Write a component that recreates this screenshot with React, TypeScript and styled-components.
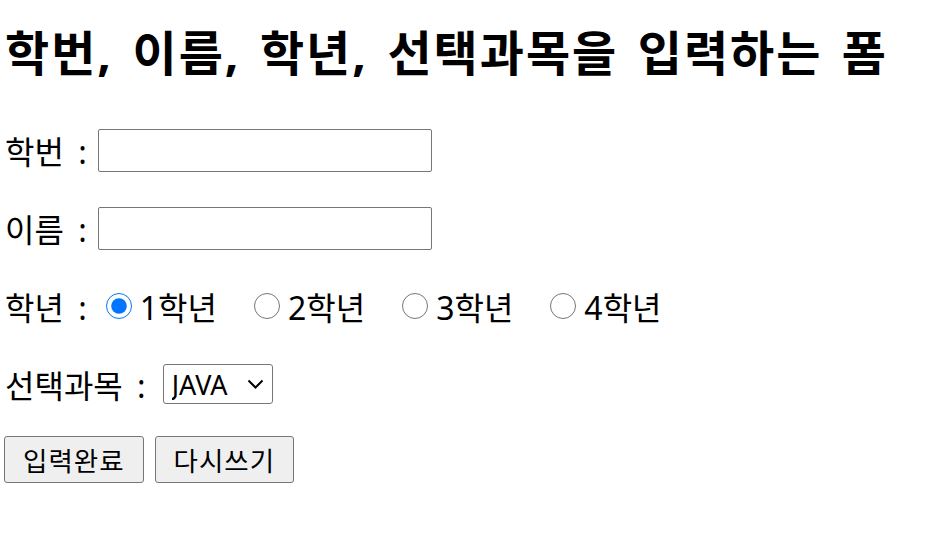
import React from 'react';
import styled, { createGlobalStyle } from 'styled-components';

const GlobalStyle = createGlobalStyle`
    html, body {
        margin: 0;
        padding: 0;
        background: #ffffff;
    }

    body {
        font-family: "Noto Sans", "Noto Sans CJK KR", sans-serif;
        color: #000000;
    }
`;

const Page = styled.form`
    display: flex;
    flex-direction: column;
    gap: 32px;
    padding: 18px 0 0 5px;
`;

const Title = styled.h2`
    margin: 0 0 7px 0;
    font-size: 48px;
    line-height: 70px;
    font-weight: 700;
    letter-spacing: 2px;
    word-spacing: 5px;
    white-space: nowrap;
`;

const Row = styled.div`
    display: flex;
    align-items: center;
    height: 46px;
    font-size: 32px;
    word-spacing: 6px;
    white-space: nowrap;
`;

const Label = styled.span`
    margin-right: 11px;
`;

const TextInput = styled.input`
    box-sizing: border-box;
    width: 334px;
    height: 43px;
    margin: 0;
    padding: 2px 6px;
    border: 1px solid #767676;
    border-radius: 2px;
    font-size: 26px;
    font-family: inherit;
    background: #ffffff;
`;

const RadioGroup = styled.div`
    display: flex;
    align-items: center;
    gap: 37px;
    margin-left: 8px;
`;

const RadioOption = styled.label`
    display: flex;
    align-items: center;
    gap: 8px;
`;

const Radio = styled.input`
    width: 26px;
    height: 26px;
    margin: 0;
    accent-color: #0075ff;
`;

const SelectBox = styled.div`
    position: relative;
    display: flex;
    margin-left: 6px;
`;

const Select = styled.select`
    box-sizing: border-box;
    width: 110px;
    height: 40px;
    margin: 0;
    padding: 0 30px 0 8px;
    appearance: none;
    border: 1px solid #767676;
    border-radius: 3px;
    font-size: 27px;
    font-family: inherit;
    word-spacing: 0;
    background: #ffffff;
    color: #000000;
`;

const Chevron = styled.svg`
    position: absolute;
    right: 9px;
    top: 15px;
    width: 17px;
    height: 10px;
    pointer-events: none;
`;

const Buttons = styled.div`
    display: flex;
    align-items: center;
    gap: 11px;
    margin: -3px 0 0 -1px;
`;

const Button = styled.button`
    box-sizing: border-box;
    height: 47px;
    padding: 0 18px;
    border: 1px solid #767676;
    border-radius: 3px;
    background: #efefef;
    font-size: 26.5px;
    letter-spacing: 1px;
    font-family: inherit;
    color: #000000;
`;

const grades = ['1학년', '2학년', '3학년', '4학년'];

const App: React.FC = () => {
    const [grade, setGrade] = React.useState('1학년');

    return (
        <>
            <GlobalStyle />
            <Page onSubmit={(e) => e.preventDefault()}>
                <Title>학번, 이름, 학년, 선택과목을 입력하는 폼</Title>
                <Row>
                    <Label>학번 :</Label>
                    <TextInput type="text" name="hakbun" />
                </Row>
                <Row>
                    <Label>이름 :</Label>
                    <TextInput type="text" name="name" />
                </Row>
                <Row>
                    <Label>학년 :</Label>
                    <RadioGroup>
                        {grades.map((g) => (
                            <RadioOption key={g}>
                                <Radio
                                    type="radio"
                                    name="grade"
                                    value={g}
                                    checked={grade === g}
                                    onChange={() => setGrade(g)}
                                />
                                {g}
                            </RadioOption>
                        ))}
                    </RadioGroup>
                </Row>
                <Row>
                    <Label>선택과목 :</Label>
                    <SelectBox>
                        <Select defaultValue="JAVA">
                            <option>JAVA</option>
                            <option>C</option>
                            <option>Python</option>
                        </Select>
                        <Chevron viewBox="0 0 17 10">
                            <path d="M1.5 1.5 L8.5 8.5 L15.5 1.5" fill="none" stroke="#000" strokeWidth="2" />
                        </Chevron>
                    </SelectBox>
                </Row>
                <Buttons>
                    <Button type="submit">입력완료</Button>
                    <Button type="reset">다시쓰기</Button>
                </Buttons>
            </Page>
        </>
    );
};

export default App;
